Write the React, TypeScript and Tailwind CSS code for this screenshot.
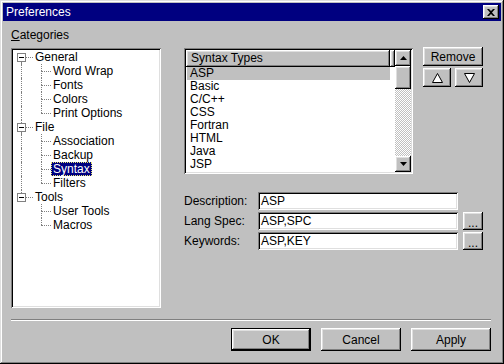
import React from 'react';

const raised =
  'bg-[#c0c0c0] shadow-[inset_-1px_-1px_#000,inset_1px_1px_#fff,inset_-2px_-2px_#808080,inset_2px_2px_#dfdfdf]';
const sunken =
  'shadow-[inset_1px_1px_#808080,inset_-1px_-1px_#fff,inset_2px_2px_#000,inset_-2px_-2px_#dfdfdf]';
const dot = 'border-dotted border-[#808080]';

const tree = [
  { label: 'General', children: ['Word Wrap', 'Fonts', 'Colors', 'Print Options'] },
  { label: 'File', children: ['Association', 'Backup', 'Syntax', 'Filters'] },
  { label: 'Tools', children: ['User Tools', 'Macros'] },
];

const syntaxTypes = ['ASP', 'Basic', 'C/C++', 'CSS', 'Fortran', 'HTML', 'Java', 'JSP'];

const Label = ({ text, selected }: { text: string; selected?: boolean }) => (
  <span
    className={`h-[14px] leading-[12px] px-[1px] border whitespace-nowrap ${
      selected ? 'bg-[#000080] text-white border-dotted border-[#e8e870]' : 'border-transparent'
    }`}
  >
    {text}
  </span>
);

const Arrow = ({ down }: { down?: boolean }) => (
  <svg width="7" height="4" viewBox="0 0 7 4">
    <polygon points={down ? '0,0 7,0 3.5,4' : '0,4 7,4 3.5,0'} fill="#000" />
  </svg>
);

const HollowArrow = ({ down }: { down?: boolean }) => (
  <svg width="11" height="10" viewBox="0 0 11 10">
    <polygon
      points={down ? '0.5,0.5 10.5,0.5 5.5,9.5' : '0.5,9.5 10.5,9.5 5.5,0.5'}
      fill="#fff"
      stroke="#000"
      strokeWidth="1"
    />
  </svg>
);

const Field = ({ label, value, browse }: { label: string; value: string; browse?: boolean }) => (
  <div className="flex items-center h-[18px]">
    <span className="w-[74px] whitespace-nowrap">{label}</span>
    <div className={`w-[200px] h-[18px] bg-white ${sunken} pl-[3px] leading-[18px]`}>{value}</div>
    {browse && (
      <div className={`ml-[5px] w-[20px] h-[18px] ${raised} flex items-end justify-center pb-[3px] leading-[8px]`}>
        ...
      </div>
    )}
  </div>
);

export default function App() {
  return (
    <div className="w-[504px] h-[364px] bg-[#c0c0c0] p-[3px] flex flex-col text-[12px] text-black font-['Liberation_Sans',Arial,sans-serif] shadow-[inset_-1px_-1px_#000,inset_1px_1px_#dfdfdf,inset_-2px_-2px_#808080,inset_2px_2px_#fff]">
      {/* title bar */}
      <div className="h-[18px] bg-[#000080] flex items-center justify-between pl-[3px] pr-[2px]">
        <span className="text-white leading-[18px]">Preferences</span>
        <div className={`w-[16px] h-[14px] ${raised} flex items-center justify-center`}>
          <svg width="8" height="7" viewBox="0 0 8 7">
            <path d="M0 0h2l2 2 2-2h2L5 3.5 8 7H6L4 5 2 7H0l3-3.5z" fill="#000" />
          </svg>
        </div>
      </div>

      <div className="flex-1 px-[8px]">
        <div className="mt-[7px] h-[14px] leading-[14px]">
          <span className="underline">C</span>ategories
        </div>

        <div className="mt-[6px] flex">
          {/* tree */}
          <div className={`w-[150px] h-[260px] bg-white ${sunken} p-[2px]`}>
            {tree.map((node, i) => {
              const isFirst = i === 0;
              const isLast = i === tree.length - 1;
              return (
                <div key={node.label}>
                  <div className="flex h-[14px]">
                    <div className="w-[13px] flex flex-col">
                      <div className={`ml-[8px] h-[3px] ${isFirst ? '' : `border-l ${dot}`}`} />
                      <div className="ml-[4px] w-[9px] h-[9px] border border-[#808080] bg-white flex items-center justify-center">
                        <div className="w-[5px] h-px bg-black" />
                      </div>
                      <div className={`ml-[8px] h-[2px] ${isLast ? '' : `border-l ${dot}`}`} />
                    </div>
                    <div className={`w-[7px] h-0 mt-[7px] border-t ${dot}`} />
                    <Label text={node.label} />
                  </div>
                  {node.children.map((child, j) => {
                    const lastChild = j === node.children.length - 1;
                    return (
                      <div key={child} className="flex h-[14px]">
                        <div className={`ml-[8px] w-[20px] ${isLast ? '' : `border-l ${dot}`}`} />
                        <div className="w-[10px] flex flex-col">
                          <div className={`h-[7px] border-l ${dot}`} />
                          <div className={`h-[7px] border-t ${dot} ${lastChild ? '' : 'border-l'}`} />
                        </div>
                        <Label text={child} selected={child === 'Syntax'} />
                      </div>
                    );
                  })}
                </div>
              );
            })}
          </div>

          {/* right side */}
          <div className="ml-[23px] flex flex-col">
            <div className="flex">
              <div className={`w-[229px] h-[126px] bg-white ${sunken} p-[2px] flex`}>
                <div className="w-[209px] flex flex-col">
                  <div className="flex h-[17px]">
                    <div className={`w-[204px] ${raised} pl-[5px] leading-[16px]`}>Syntax Types</div>
                    <div className={`flex-1 ${raised}`} />
                  </div>
                  {syntaxTypes.map((t) => (
                    <div
                      key={t}
                      className={`ml-[1px] w-[203px] h-[13px] leading-[13px] pl-[3px] ${
                        t === 'ASP' ? 'bg-[#c0c0c0]' : ''
                      }`}
                    >
                      {t}
                    </div>
                  ))}
                </div>
                <div className="w-[16px] flex flex-col">
                  <div className={`h-[16px] ${raised} flex items-center justify-center`}>
                    <Arrow />
                  </div>
                  <div className={`h-[23px] ${raised}`} />
                  <div className="flex-1 bg-[repeating-conic-gradient(#c0c0c0_0%_25%,#fff_0%_50%)] bg-[length:2px_2px]" />
                  <div className={`h-[16px] ${raised} flex items-center justify-center`}>
                    <Arrow down />
                  </div>
                </div>
              </div>

              <div className="ml-[10px] -mt-px flex flex-col">
                <div className={`w-[60px] h-[19px] ${raised} flex items-center justify-center`}>Remove</div>
                <div className="mt-[2px] flex gap-[4px]">
                  <div className={`w-[28px] h-[19px] ${raised} flex items-center justify-center`}>
                    <HollowArrow />
                  </div>
                  <div className={`w-[28px] h-[19px] ${raised} flex items-center justify-center`}>
                    <HollowArrow down />
                  </div>
                </div>
              </div>
            </div>

            <div className="mt-[18px] flex flex-col gap-[2px]">
              <Field label="Description:" value="ASP" />
              <Field label="Lang Spec:" value="ASP,SPC" browse />
              <Field label="Keywords:" value="ASP,KEY" browse />
            </div>
          </div>
        </div>

        <div className="mt-[11px] w-[480px] h-[2px] border-t border-[#808080] border-b border-b-white" />

        <div className="mt-[7px] w-[480px] flex justify-end gap-[10px]">
          <div className="w-[80px] h-[23px] border border-black">
            <div className={`w-full h-full ${raised} flex items-center justify-center`}>OK</div>
          </div>
          <div className={`w-[80px] h-[23px] ${raised} flex items-center justify-center`}>Cancel</div>
          <div className={`w-[80px] h-[23px] ${raised} flex items-center justify-center`}>Apply</div>
        </div>
      </div>
    </div>
  );
}
